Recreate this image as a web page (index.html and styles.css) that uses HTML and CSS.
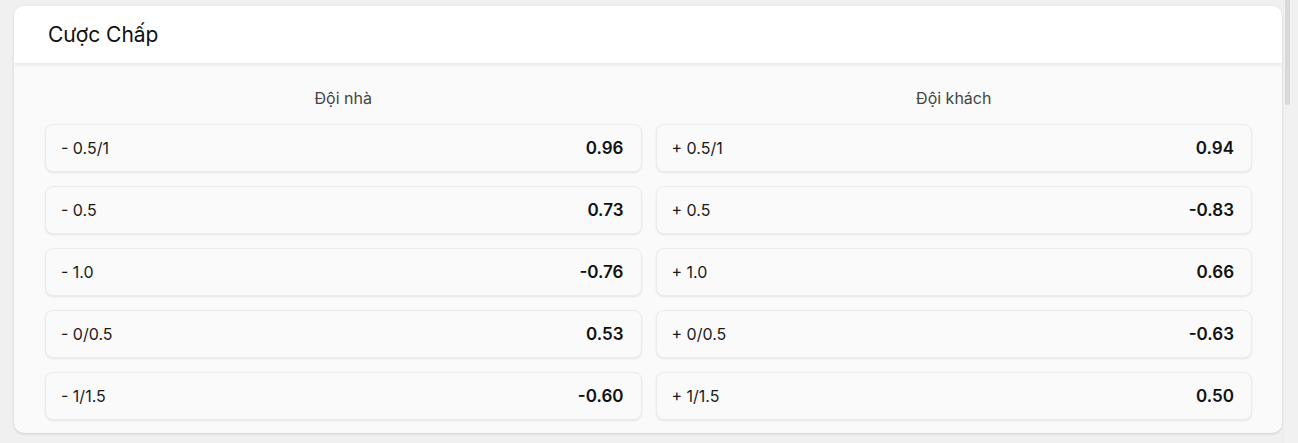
FILE: index.html
```html
<!DOCTYPE html>
<html lang="vi">
<head>
<meta charset="utf-8">
<title>Cược Chấp</title>
<link rel="stylesheet" href="styles.css">
</head>
<body>
<div class="page">
  <section class="card">
    <header class="card-header">
      <h2 class="card-title">Cược Chấp</h2>
    </header>
    <div class="card-body">
      <div class="col">
        <div class="col-title">Đội nhà</div>
        <div class="row"><span class="label">- 0.5/1</span><span class="value">0.96</span></div>
        <div class="row"><span class="label">- 0.5</span><span class="value">0.73</span></div>
        <div class="row"><span class="label">- 1.0</span><span class="value">-0.76</span></div>
        <div class="row"><span class="label">- 0/0.5</span><span class="value">0.53</span></div>
        <div class="row"><span class="label">- 1/1.5</span><span class="value">-0.60</span></div>
      </div>
      <div class="col">
        <div class="col-title">Đội khách</div>
        <div class="row"><span class="label">+ 0.5/1</span><span class="value">0.94</span></div>
        <div class="row"><span class="label">+ 0.5</span><span class="value">-0.83</span></div>
        <div class="row"><span class="label">+ 1.0</span><span class="value">0.66</span></div>
        <div class="row"><span class="label">+ 0/0.5</span><span class="value">-0.63</span></div>
        <div class="row"><span class="label">+ 1/1.5</span><span class="value">0.50</span></div>
      </div>
    </div>
  </section>
</div>
<div class="scrollbar"><div class="scroll-thumb"></div></div>
</body>
</html>
```
FILE: styles.css
```css
html, body {
  margin: 0;
  padding: 0;
  height: 100%;
  overflow: hidden;
}
body {
  background: #f0f0f0;
  font-family: Inter, "Noto Sans", "Liberation Sans", sans-serif;
  color: #111;
}
.page {
  padding: 6px 16px 0 14px;
}
.scrollbar {
  position: fixed;
  top: 0;
  right: 0;
  width: 15px;
  height: 100%;
  background: #f1f1f1;
  border-left: 1px solid #ececec;
  box-sizing: border-box;
}
.scroll-thumb {
  margin-left: 1px;
  width: 5px;
  height: 105px;
  background: #d9d9d9;
  border-radius: 0 0 3px 3px;
}
.card {
  background: #f9faf9;
  border-radius: 10px;
  box-shadow: 0 1px 3px rgba(0, 0, 0, 0.14);
  overflow: hidden;
}
.card-header {
  background: #fff;
  height: 57px;
  display: flex;
  align-items: center;
  padding-left: 34px;
  box-shadow: 0 2px 4px rgba(0, 0, 0, 0.08);
  position: relative;
}
.card-title {
  margin: 0;
  font-size: 21px;
  font-weight: 400;
  color: #111;
}
.card-body {
  display: grid;
  grid-template-columns: 1fr 1fr;
  column-gap: 14px;
  padding: 20px 30px 13px 31px;
}
.col {
  display: flex;
  flex-direction: column;
  gap: 14px;
}
.col-title {
  text-align: center;
  font-size: 16px;
  color: #444;
  line-height: 30px;
  margin-bottom: -3px;
}
.row {
  height: 48px;
  box-sizing: border-box;
  display: flex;
  align-items: center;
  justify-content: space-between;
  padding: 0 17px 0 15px;
  background: #f9faf9;
  border: 1px solid #ebeceb;
  border-radius: 8px;
  box-shadow: 0 1px 2px rgba(0, 0, 0, 0.09);
}
.label {
  font-size: 16px;
  color: #1a1a1a;
}
.value {
  font-size: 17px;
  font-weight: 600;
  color: #111;
}
```
